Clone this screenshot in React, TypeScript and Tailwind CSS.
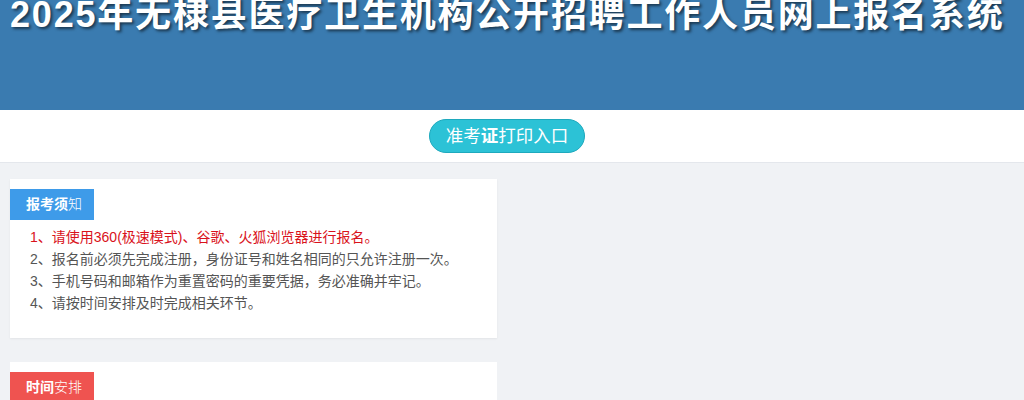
import React from 'react';

const notices = [
    { text: '1、请使用360(极速模式)、谷歌、火狐浏览器进行报名。', red: true },
    { text: '2、报名前必须先完成注册，身份证号和姓名相同的只允许注册一次。' },
    { text: '3、手机号码和邮箱作为重置密码的重要凭据，务必准确并牢记。' },
    { text: '4、请按时间安排及时完成相关环节。' },
];

const font = { fontFamily: '"Liberation Sans", "Noto Sans CJK SC", sans-serif' };

const Tag: React.FC<{ bold: string; rest: string; color: string }> = ({ bold, rest, color }) => (
    <div className={`mt-[10px] inline-flex h-[31px] w-[84px] items-center pl-4 text-[14px] text-white ${color}`}>
        <span className="font-bold">{bold}</span>
        <span className="font-light">{rest}</span>
    </div>
);

const App: React.FC = () => {
    return (
        <div className="h-[400px] overflow-hidden bg-[#f0f2f5]" style={font}>
            <header className="h-[110px] overflow-hidden bg-[#3a7bb0]">
                <h1 className="-mt-[5px] pl-[10px] text-[36px] leading-[40px] font-bold tracking-[1.8px] whitespace-nowrap text-white [text-shadow:2px_2px_3px_rgba(0,0,0,0.55)]">
                    2025年无棣县医疗卫生机构公开招聘工作人员网上报名系统
                </h1>
            </header>

            <div className="flex h-[53px] items-center justify-center border-b border-[#e4e7ec] bg-white">
                <button className="mr-[10px] h-[34px] w-[156px] rounded-full border border-[#1ea9bd] bg-[#2cc2d6] text-[17.5px] text-white">
                    准考<span className="font-bold">证</span>打印入口
                </button>
            </div>

            <div className="flex flex-col gap-6 px-[10px] pt-4">
                <section className="w-[487px] bg-white pb-[24px] shadow-[0_1px_2px_rgba(0,0,0,0.06)]">
                    <Tag bold="报考须" rest="知" color="bg-[#3e9be9]" />
                    <ul className="mt-[6px] pl-5 text-[14px] leading-[22px] text-[#555]">
                        {notices.map(n => (
                            <li key={n.text} className={n.red ? 'text-[#d9121b]' : ''}>{n.text}</li>
                        ))}
                    </ul>
                </section>

                <section className="h-[80px] w-[487px] bg-white">
                    <Tag bold="时间" rest="安排" color="bg-[#ef5350]" />
                </section>
            </div>
        </div>
    );
};

export default App;
